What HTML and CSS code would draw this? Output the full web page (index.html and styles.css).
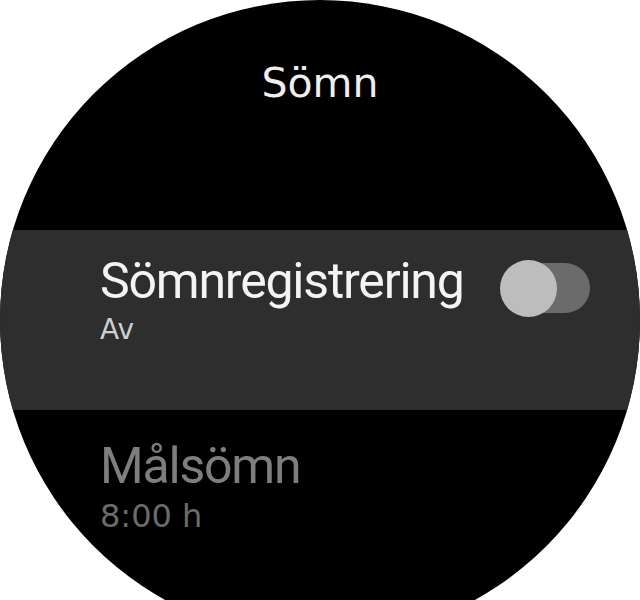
FILE: index.html
```html
<!DOCTYPE html>
<html lang="sv">
<head>
<meta charset="utf-8">
<title>Sömn</title>
<link rel="stylesheet" href="styles.css">
</head>
<body>
<div class="screen">
  <div class="watch">
    <div class="title">Sömn</div>
    <div class="item selected">
      <div class="text">
        <div class="primary">Sömnregistrering</div>
        <div class="secondary av">Av</div>
      </div>
      <div class="toggle"><span class="track"></span><span class="knob"></span></div>
    </div>
    <div class="item">
      <div class="text">
        <div class="primary dim">Målsömn</div>
        <div class="secondary value dim2">8:00 h</div>
      </div>
    </div>
  </div>
</div>
</body>
</html>
```
FILE: styles.css
```css
html, body {
  margin: 0;
  padding: 0;
  background: #ffffff;
  height: 600px;
  overflow: hidden;
}
.screen {
  width: 640px;
  height: 600px;
  overflow: hidden;
}
.watch {
  width: 640px;
  height: 640px;
  border-radius: 50%;
  background: #000000;
  overflow: hidden;
  display: flex;
  flex-direction: column;
}
.title {
  margin-top: 59px;
  height: 48px;
  line-height: 48px;
  text-align: center;
  font-family: "DejaVu Sans", sans-serif;
  font-size: 41px;
  color: #eeeeee;
}
.item {
  display: flex;
  align-items: flex-start;
  padding: 0 50px 0 100px;
  box-sizing: border-box;
}
.item.selected {
  margin-top: 123px;
  height: 180px;
  padding-top: 23px;
  background: #2e2e2e;
}
.item + .item {
  margin-top: 28px;
}
.primary {
  font-family: Roboto, sans-serif;
  font-size: 50px;
  line-height: 56px;
  letter-spacing: -1.2px;
  color: #f4f4f4;
}
.primary.dim {
  color: #7e7f7c;
}
.secondary {
  font-family: "DejaVu Sans", sans-serif;
}
.secondary.av {
  margin-top: 6px;
  font-size: 28px;
  line-height: 30px;
  color: #cfcfcf;
}
.secondary.value {
  margin-top: 4px;
  font-size: 32px;
  line-height: 36px;
}
.dim2 {
  color: #6b6c69;
}
.toggle {
  margin-left: auto;
  margin-top: 7px;
  width: 90px;
  height: 57px;
  position: relative;
}
.track {
  position: absolute;
  right: 0;
  top: 3px;
  width: 80px;
  height: 50px;
  border-radius: 25px;
  background: #6b6b6b;
}
.knob {
  position: absolute;
  left: 0;
  top: 0;
  width: 57px;
  height: 57px;
  border-radius: 50%;
  background: #bdbdbd;
}
```
